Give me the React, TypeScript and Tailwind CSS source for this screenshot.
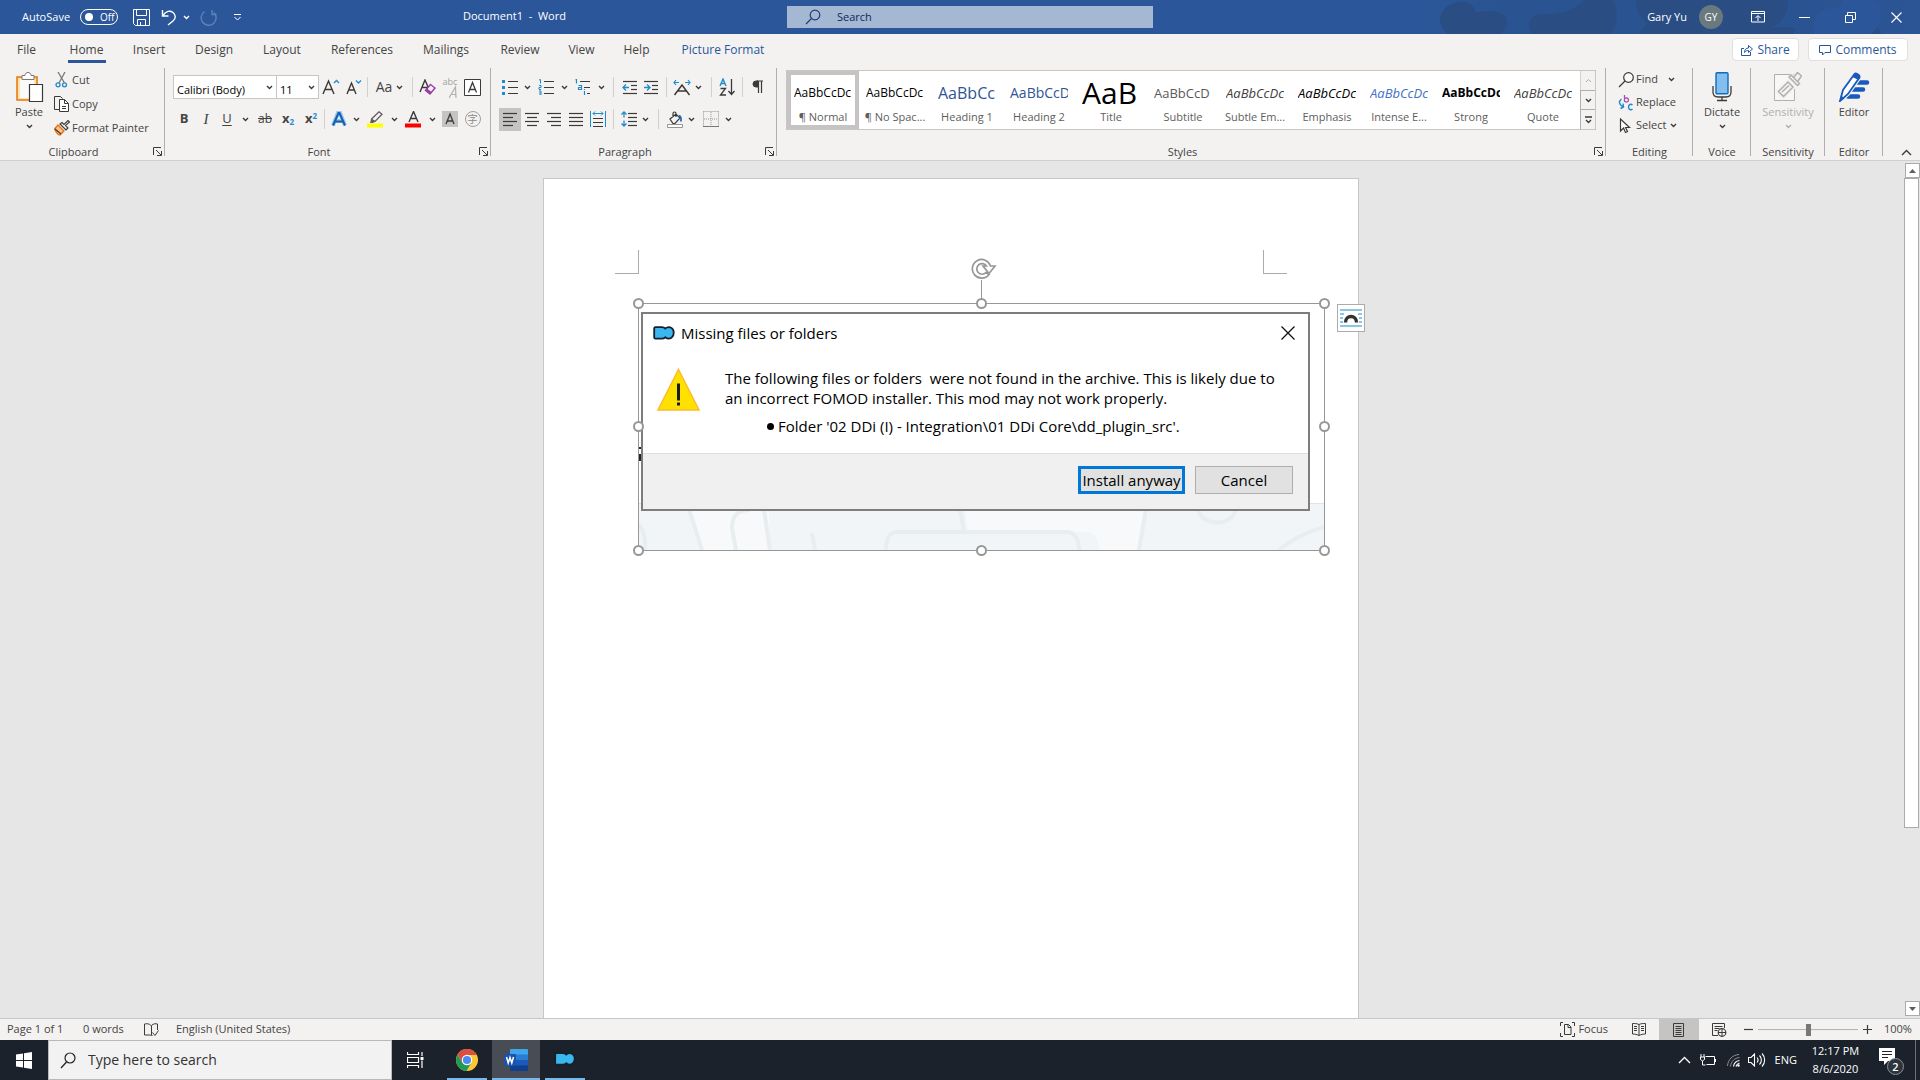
import type { ReactNode } from "react";

const INK = "#3b3a39";
const BLUE = "#1e8bcd";

function Svg({ w = 16, h = 16, children, className = "" }: { w?: number; h?: number; children: ReactNode; className?: string }) {
  return (
    <svg width={w} height={h} viewBox={`0 0 ${w} ${h}`} fill="none" stroke={INK} className={`shrink-0 ${className}`} aria-hidden="true">
      {children}
    </svg>
  );
}

function Caret({ color = INK }: { color?: string }) {
  return (
    <Svg w={7} h={5}>
      <path d="M1 1l2.5 2.5L6 1" stroke={color} strokeWidth="1.4" />
    </Svg>
  );
}

function Cell({ w, on, children }: { w: string; on?: boolean; children: ReactNode }) {
  return (
    <button type="button" className={`flex h-[23px] shrink-0 items-center justify-center ${w} ${on ? "bg-[#c5c4c3]" : ""}`}>
      {children}
    </button>
  );
}

function Sep({ w }: { w: string }) {
  return (
    <div className={`flex shrink-0 justify-center ${w}`}>
      <div className="h-5 w-px bg-[#d2d0ce]" />
    </div>
  );
}

function Launcher() {
  return (
    <button type="button" className="absolute bottom-1 right-[3px]">
      <Svg w={9} h={9}>
        <path d="M.5 8V.5H8M3 3l5 5M8.500 4v4.500H4" />
      </Svg>
    </button>
  );
}

function Group({ label, w, launcher, children }: { label: string; w: string; launcher?: boolean; children: ReactNode }) {
  return (
    <section className={`relative flex h-[92px] shrink-0 flex-col ${w}`}>
      <div className="flex-1">{children}</div>
      <h2 className={`h-4 text-center text-[11px] leading-4 ${launcher ? "pr-[18px]" : ""}`}>{label}</h2>
      {launcher && <Launcher />}
      <div className="absolute right-0 top-0 h-[88px] w-px bg-[#b1afad]" />
    </section>
  );
}

function lines(rows: [number, number][], ys = [2.5, 6.5, 10.5, 14.5]) {
  return rows.map(([a, b], i) => <path key={i} d={`M${a} ${ys[i]}H${b}`} strokeWidth="1.2" />);
}

const tabs: [string, string][] = [
  ["File", "w-[53px]"],
  ["Home", "w-[67px]"],
  ["Insert", "w-[58px]"],
  ["Design", "w-[72px]"],
  ["Layout", "w-[64px]"],
  ["References", "w-[96px]"],
  ["Mailings", "w-[72px]"],
  ["Review", "w-[76px]"],
  ["View", "w-[47px]"],
  ["Help", "w-[63px]"],
  ["Picture Format", "w-[110px]"],
];

const styleCards: [string, string, string][] = [
  ["¶ Normal", "AaBbCcDc", "text-xs text-black"],
  ["¶ No Spac...", "AaBbCcDc", "text-xs text-black"],
  ["Heading 1", "AaBbCc", "text-base text-[#2f5496]"],
  ["Heading 2", "AaBbCcD", "text-sm text-[#2f5496]"],
  ["Title", "AaB", "text-[30px] text-black"],
  ["Subtitle", "AaBbCcD", "text-[13px] text-[#5a5a5a]"],
  ["Subtle Em...", "AaBbCcDc", "text-[13px] italic text-[#404040]"],
  ["Emphasis", "AaBbCcDc", "text-[13px] italic text-black"],
  ["Intense E...", "AaBbCcDc", "text-[13px] italic text-[#4472c4]"],
  ["Strong", "AaBbCcDc", "text-xs font-bold text-black"],
  ["Quote", "AaBbCcDc", "text-[13px] italic text-[#404040]"],
];

function TitleBar() {
  return (
    <header className="relative flex h-[34px] shrink-0 items-center bg-[#2b579a] text-[11px] text-white">
      <svg className="absolute right-0 top-0" width="500" height="34" viewBox="0 0 500 34" aria-hidden="true">
        <defs>
          <linearGradient id="sky" x1="0" x2="1">
            <stop offset="0" stopColor="#2b579a" />
            <stop offset=".15" stopColor="#2a5391" />
            <stop offset=".8" stopColor="#2a5391" />
            <stop offset="1" stopColor="#2b5596" />
          </linearGradient>
        </defs>
        <path fill="url(#sky)" d="M0 0h500v34H0z" />
        <g fill="#2a4d84">
          <path d="M28 34c-12-8-10-25 4-30 10-6 22-1 24 9 14-4 30-2 31 8 0 6-3 10-6 13z" />
          <path d="M112 34c-6-10-2-18 8-20 20 2 38-6 44-14h28c8 10 6 26-2 34z" />
          <path d="M216 0h152c1 12-6 24-18 28 8 0 16-2 26 1l-3 5H220c0-4 4-8 8-10-8-5-12-14-12-24z" />
          <path d="M441 34c2-10 18-11 20 0z" />
        </g>
        <g fill="#2b579a">
          <path d="M394 34c-2-14 2-22 14-26 8 2 12 0 14-8h33c10 10 6 26-4 34z" />
        </g>
      </svg>
      <div className="relative flex flex-1 items-center">
        <span className="ml-[22px] w-[58px]">AutoSave</span>
        <button type="button" role="switch" aria-checked="false" aria-label="AutoSave" className="flex h-4 w-[38px] items-center gap-[7px] rounded-full border border-white pl-1 text-[10px]">
          <span className="size-2 rounded-full bg-white" />
          Off
        </button>
        <button type="button" aria-label="Save" className="ml-[15px]">
          <Svg w={17} h={17}>
            <path stroke="#fff" d="M.5.500h16v16h-14l-2-2zM3.500.500v6h10v-6M4.500 16.500v-6h8v6M7.500 13v3" />
          </Svg>
        </button>
        <button type="button" aria-label="Undo" className="ml-[11px] flex items-center gap-[6px]">
          <Svg w={16} h={17}>
            <path stroke="#fff" strokeWidth="1.4" d="M1.500 1v6h6M1.500 7C5 2 9 1 12 3.500s3 6 0 8.500l-5 4" />
          </Svg>
          <Caret color="#fff" />
        </button>
        <button type="button" aria-label="Redo" className="ml-[10px]">
          <Svg w={18} h={17}>
            <path stroke="#5f82b8" strokeWidth="1.4" d="M12 1v4.500h4.500M4.500 2.500a7.500 7.500 0 1 0 9.500 1" />
          </Svg>
        </button>
        <button type="button" aria-label="Customize" className="ml-[15px]">
          <Svg w={9} h={7}>
            <path stroke="#fff" d="M1 .500h7M1.500 3l3 3 3-3" />
          </Svg>
        </button>
        <h1 className="ml-[221px] whitespace-pre pb-px">Document1  -  Word</h1>
      </div>
      <label className="relative ml-5 flex h-[22px] w-[366px] items-center bg-[#a5b8d3] pl-[18px]">
        <Svg w={16} h={16}>
          <circle cx="10" cy="6" r="4.800" stroke="#1e3f75" strokeWidth="1.200" />
          <path d="M6.500 9.500L1 15" stroke="#1e3f75" strokeWidth="1.200" />
        </Svg>
        <input type="text" placeholder="Search" className="ml-4 w-60 bg-transparent text-[11px] outline-none placeholder:text-[#0c2a5a]" />
      </label>
      <div className="relative flex flex-1 items-center justify-end">
        <span>Gary Yu</span>
        <span className="ml-3 flex size-6 items-center justify-center rounded-full bg-[#69797e] text-[10px]">GY</span>
        <button type="button" aria-label="Ribbon Display Options" className="ml-7">
          <Svg w={14} h={12}>
            <path stroke="#fff" d="M.500.500h13v10.500H.500zM.500 2.500h13M7 10V5M4.500 7L7 4.500 9.500 7" />
          </Svg>
        </button>
        <button type="button" aria-label="Minimize" className="ml-[34px]">
          <Svg w={11} h={11}>
            <path stroke="#fff" d="M0 5.500h11" />
          </Svg>
        </button>
        <button type="button" aria-label="Restore" className="ml-[35px]">
          <Svg w={11} h={11}>
            <path stroke="#fff" d="M.500 3.500h7v7h-7zM2.500 3V.500h8v7H8" />
          </Svg>
        </button>
        <button type="button" aria-label="Close" className="ml-[35px] mr-[18px]">
          <Svg w={11} h={11}>
            <path stroke="#fff" d="M.500.500l10 10M10.500.500l-10 10" strokeWidth="1.200" />
          </Svg>
        </button>
      </div>
    </header>
  );
}

function TabRow() {
  return (
    <nav className="flex h-[34px] items-center text-xs">
      {tabs.map(([name, w]) => (
        <button key={name} type="button" className={`relative h-[34px] shrink-0 pb-[3px] ${w} ${name === "Picture Format" ? "text-[#2b579a]" : ""}`}>
          {name}
          {name === "Home" && <span className="absolute bottom-[5px] left-[15px] h-[3px] w-[38px] bg-[#2b579a]" />}
        </button>
      ))}
      <div className="ml-auto mr-3 flex gap-[9px] pb-[3px] text-[#2b579a]">
        <button type="button" className="flex h-[23px] w-[67px] items-center justify-center gap-1 rounded-sm border border-[#e1dfdd] bg-white">
          <Svg w={12} h={12}>
            <path stroke="#2b579a" d="M3 4.500H.500v7h9V8M3.500 8.500c0-3 1.500-4.500 4-4.500V1.500l4 3.500-4 3.500V6.500c-2 0-3 .500-4 2z" />
          </Svg>
          Share
        </button>
        <button type="button" className="flex h-[23px] w-[100px] items-center justify-center gap-1 rounded-sm border border-[#e1dfdd] bg-white">
          <Svg w={12} h={12}>
            <path stroke="#2b579a" d="M.500 1.500h11v7H6l-2.500 2.500V8.500h-3z" />
          </Svg>
          Comments
        </button>
      </div>
    </nav>
  );
}

function ClipboardGroup() {
  return (
    <Group label="Clipboard" w="w-[165px]" launcher>
      <div className="flex">
        <button type="button" className="flex w-[54px] flex-col items-center pl-1 pt-[3px] text-[11px] leading-4">
          <Svg w={30} h={33}>
            <path d="M3 6h20v23H3z" fill="#fce4a8" stroke="#e8730c" strokeWidth="1.500" />
            <path d="M6 8h14v19H6z" fill="#fafafa" stroke="none" />
            <path d="M8 8.500v-4h3c0-4 6-4 6 0h3v4z" fill="#fff" stroke="#7a7978" />
            <path d="M15.500 13.500h13v17h-13z" fill="#fff" strokeWidth="1.200" />
          </Svg>
          Paste
          <span className="mt-1">
            <Caret />
          </span>
        </button>
        <div className="text-[11px]">
          <button type="button" className="flex h-6 items-center">
            <Svg w={18} h={16}>
              <path d="M4 0l6.500 11M11 0L5 11" stroke="#7a7978" strokeWidth="1.300" />
              <circle cx="4" cy="12.800" r="2" stroke={BLUE} strokeWidth="1.300" />
              <circle cx="10.500" cy="12.800" r="2" stroke={BLUE} strokeWidth="1.300" />
            </Svg>
            Cut
          </button>
          <button type="button" className="flex h-6 items-center">
            <Svg w={18} h={16}>
              <path d="M5 13.500H.500V.500h6l2 2" />
              <path d="M5.500 3.500h5l4 4v8h-9z" fill="#fff" />
              <path d="M10.500 3.500v4h4M8 10.500h4M8 12.500h4" />
            </Svg>
            Copy
          </button>
          <button type="button" className="flex h-6 items-center">
            <Svg w={18} h={16}>
              <path d="M4 5l6 6-4 4c-2 0-4-3-5.500-6z" fill="#f9c38b" stroke="#e8730c" strokeWidth="1.300" />
              <path d="M1 9l6 5M6 4l6 6 2-2-2.500-2.500L15.500 2 14 .500l-4 4L8 2.500z" fill="#f3f2f1" strokeWidth="1.100" />
            </Svg>
            Format Painter
          </button>
        </div>
      </div>
    </Group>
  );
}

function Combo({ value, label, w }: { value: string; label: string; w: string }) {
  return (
    <div className={`relative -mr-px h-6 border border-[#c8c6c4] bg-white ${w}`}>
      <select aria-label={label} className="h-full w-full appearance-none bg-transparent pb-[2px] pl-[3px] text-[11px] text-black outline-none">
        <option>{value}</option>
      </select>
      <span className="pointer-events-none absolute right-[3px] top-0 flex h-full items-center">
        <Caret />
      </span>
    </div>
  );
}

function FontGroup() {
  return (
    <Group label="Font" w="w-[326px]" launcher>
      <div className="flex h-[35px] items-center pl-2 pt-[3px]">
        <Combo value="Calibri (Body)" label="Font" w="w-[104px]" />
        <Combo value="11" label="Font size" w="w-[43px]" />
        <Cell w="w-[25px]">
          <Svg w={18} h={16}>
            <path d="M1 15L6.500 2 12 15M3 10.500h7" strokeWidth="1.400" />
            <path d="M12 4l2.500-2.500L17 4" stroke={BLUE} strokeWidth="1.300" />
          </Svg>
        </Cell>
        <Cell w="w-[21px]">
          <Svg w={16} h={16}>
            <path d="M1 15L5.500 4 10 15M2.500 11h6" strokeWidth="1.400" />
            <path d="M10 1.500L12.500 4 15 1.500" stroke={BLUE} strokeWidth="1.300" />
          </Svg>
        </Cell>
        <Sep w="w-[6px]" />
        <Cell w="w-[39px]">
          <span className="mr-1 text-sm">Aa</span>
          <Caret />
        </Cell>
        <Sep w="w-[6px]" />
        <Cell w="w-[24px]">
          <Svg w={17} h={16}>
            <path d="M1 13L6 1l4 9M3 8.500h6" strokeWidth="1.400" />
            <path d="M11.500 5.500L16 9l-5 6-4.500-3.500z" fill="#f3f2f1" stroke="#9b3aa8" strokeWidth="1.400" />
            <path d="M6.500 11.500L8 9.500l4.500 3.500-1.500 2z" fill="#9b3aa8" stroke="none" />
          </Svg>
        </Cell>
        <Cell w="w-[22px]">
          <span className="self-start text-[9px] leading-3 text-[#a19f9d]">abc</span>
          <Svg w={8} h={14} className="-ml-2 self-end">
            <path d="M0 13L6.500 2 7 13M3 9.500h4" stroke="#b1afad" strokeWidth="1.200" />
          </Svg>
        </Cell>
        <Cell w="w-[22px]">
          <Svg w={17} h={17}>
            <path d="M.500.500h16v16H.500z" fill="#fff" />
            <path d="M4.500 13.500l4-10 4 10M6 10.500h5" strokeWidth="1.300" />
          </Svg>
        </Cell>
      </div>
      <div className="flex h-8 items-center pl-2">
        <Cell w="w-[22px]"><b className="text-[13px]">B</b></Cell>
        <Cell w="w-[22px]"><i className="font-['Liberation_Serif'] text-[15px]">I</i></Cell>
        <Cell w="w-[20px]"><u className="text-[13px] underline-offset-2">U</u></Cell>
        <Cell w="w-[17px]"><Caret /></Cell>
        <Cell w="w-[22px]"><s className="text-xs">ab</s></Cell>
        <Cell w="w-[24px]"><b className="text-[13px]">x<sub className="text-[8px] text-[#1e8bcd]">2</sub></b></Cell>
        <Cell w="w-[22px]"><b className="text-[13px]">x<sup className="text-[8px] text-[#1e8bcd]">2</sup></b></Cell>
        <Sep w="w-[5px]" />
        <Cell w="w-[24px]">
          <Svg w={16} h={16}>
            <path d="M2 14.500L7 2h2l5 12.500M4.500 10h7" stroke="#9cc3e8" strokeWidth="4" />
            <path d="M2 14.500L7.500 2h1L14 14.500M4.500 10.500h7" stroke="#1260b0" strokeWidth="2" />
          </Svg>
        </Cell>
        <Cell w="w-[10px]"><Caret /></Cell>
        <Cell w="w-[28px]">
          <Svg w={17} h={17}>
            <path d="M4.500 8L12 .800l3 2.500L8 10.500l-3.500.500z" stroke="#605e5c" strokeWidth="1.300" />
            <path d="M4.500 7.500L3 12h3l2.500-2z" fill="#605e5c" stroke="none" />
            <path d="M0 12.500h16v4H0z" fill="#ff0" stroke="none" />
          </Svg>
        </Cell>
        <Cell w="w-[10px]"><Caret /></Cell>
        <Cell w="w-[28px]">
          <Svg w={17} h={17}>
            <path d="M4 11L8.500.500 13 11M5.500 7.500h6" strokeWidth="1.400" />
            <path d="M0 12.500h16v4H0z" fill="#f00" stroke="none" />
          </Svg>
        </Cell>
        <Cell w="w-[10px]"><Caret /></Cell>
        <Cell w="w-[25px]">
          <Svg w={16} h={16}>
            <path d="M0 0h16v16H0z" fill="#c5c4c3" stroke="none" />
            <path d="M4 13l4-10 4 10M5.500 10h5" strokeWidth="1.300" />
          </Svg>
        </Cell>
        <Cell w="w-[21px]">
          <span className="flex size-4 items-center justify-center rounded-full border border-[#a19f9d] font-['Noto_Sans_CJK_SC',sans-serif] text-[10px] leading-none text-[#8a8886]">字</span>
        </Cell>
      </div>
    </Group>
  );
}

function ParagraphGroup() {
  return (
    <Group label="Paragraph" w="w-[286px]" launcher>
      <div className="flex h-[35px] items-center pl-2 pt-[3px]">
        <Cell w="w-[22px]">
          <Svg>
            <path d="M0 2.500h3M0 8.500h3M0 14.500h3" stroke={BLUE} strokeWidth="3" />
            <path d="M6 2.500h10M6 8.500h10M6 14.500h10" strokeWidth="1.200" />
          </Svg>
        </Cell>
        <Cell w="w-[13px]"><Caret /></Cell>
        <Cell w="w-[24px]">
          <Svg>
            <path d="M1 1l1.500-.500v4M1 6.500h2v2H1v2h2M1 12h2v4H1M1 14h2" stroke={BLUE} />
            <path d="M6 2.500h10M6 8.500h10M6 14.500h10" strokeWidth="1.200" />
          </Svg>
        </Cell>
        <Cell w="w-[13px]"><Caret /></Cell>
        <Cell w="w-[24px]">
          <Svg>
            <path d="M.500 1l1-.500v4M3.500 6.500h3v4h-3v-2h3M9.500 12v4M9.500 10v1" stroke={BLUE} strokeWidth="1.200" />
            <path d="M5 2.500h10M9 8.500h6M12 14.500h3" strokeWidth="1.200" />
          </Svg>
        </Cell>
        <Cell w="w-[12px]"><Caret /></Cell>
        <Sep w="w-[12px]" />
        <Cell w="w-[21px]">
          <Svg>
            {lines([[1, 15], [9, 15], [9, 15], [1, 15]])}
            <path d="M1 8.500h6M4 5.500l-3 3 3 3" stroke={BLUE} strokeWidth="1.300" />
          </Svg>
        </Cell>
        <Cell w="w-[22px]">
          <Svg>
            {lines([[1, 15], [9, 15], [9, 15], [1, 15]])}
            <path d="M1 8.500h6M4 5.500l3 3-3 3" stroke={BLUE} strokeWidth="1.300" />
          </Svg>
        </Cell>
        <Sep w="w-[9px]" />
        <Cell w="w-[22px]">
          <Svg w={18} h={17}>
            <path d="M1.500 16L9 6l7.500 10M5 12h8" strokeWidth="1.500" />
            <path d="M1 3.500h5M3 1L1 3.500 3 6M17 3.500h-5M15 1l2 2.500L15 6" stroke={BLUE} strokeWidth="1.200" />
          </Svg>
        </Cell>
        <Cell w="w-[10px]"><Caret /></Cell>
        <Sep w="w-[16px]" />
        <Cell w="w-[16px]">
          <Svg w={17} h={18}>
            <path d="M1 8l3-7 3 7M2 5.500h4" stroke={BLUE} strokeWidth="1.400" />
            <path d="M1.500 10.500h5L1.500 17h5.500M12.500 1v15M9.500 13l3 3.500 3-3.500" strokeWidth="1.300" />
          </Svg>
        </Cell>
        <Sep w="w-[14px]" />
        <Cell w="w-[18px]">
          <Svg w={12} h={14}>
            <path d="M6 1H4a3 3 0 0 0 0 6h2z" fill={INK} />
            <path d="M5 1h6M6.500 1v12M9.500 1v12" strokeWidth="1.200" />
          </Svg>
        </Cell>
      </div>
      <div className="flex h-8 items-center pl-2">
        <Cell w="w-[22px]" on>
          <Svg>{lines([[1, 15], [1, 11], [1, 15], [1, 11]])}</Svg>
        </Cell>
        <Cell w="w-[22px]">
          <Svg>{lines([[1, 15], [3, 13], [1, 15], [3, 13]])}</Svg>
        </Cell>
        <Cell w="w-[22px]">
          <Svg>{lines([[1, 15], [5, 15], [1, 15], [5, 15]])}</Svg>
        </Cell>
        <Cell w="w-[22px]">
          <Svg>{lines([[1, 15], [1, 15], [1, 15], [1, 15]])}</Svg>
        </Cell>
        <Cell w="w-[22px]">
          <Svg>
            <path d="M.500 0v16M15.500 0v16M3 2.500h10M5 .500l-2 2 2 2M11 .500l2 2-2 2" stroke={BLUE} />
            <path d="M3 7.500h10M3 11.500h10M3 15.500h10" strokeWidth="1.200" />
          </Svg>
        </Cell>
        <Sep w="w-[9px]" />
        <Cell w="w-[22px]">
          <Svg>
            <path d="M3 1v5.500M.500 3.500L3 1l2.500 2.500M3 9.500V15M.500 12.500L3 15l2.500-2.500" stroke={BLUE} strokeWidth="1.300" />
            {lines([[7, 16], [7, 16], [7, 16], [7, 16]])}
          </Svg>
        </Cell>
        <Cell w="w-[10px]"><Caret /></Cell>
        <Sep w="w-[16px]" />
        <Cell w="w-[17px]">
          <Svg w={16} h={17}>
            <path d="M3 8l6-5 4 4-5 5.500H6zM9 6V2.500a1.500 1.500 0 0 0-3 0V6" strokeWidth="1.200" />
            <path d="M12 4.500c2 1 2.500 3 1.800 6" stroke="#1e6fb8" strokeWidth="1.800" />
            <path d="M.500 13.500h15v3H.500z" fill="#fff" stroke="#979593" />
          </Svg>
        </Cell>
        <Cell w="w-[17px]"><Caret /></Cell>
        <Cell w="w-[22px]">
          <Svg>
            <path d="M.500.500h15M.500.500v15M15.500.500v15M8 1v14M1 8h14" stroke="#979593" strokeDasharray="1 1" />
            <path d="M0 15.500h16" stroke="#797775" />
          </Svg>
        </Cell>
        <Cell w="w-[12px]"><Caret /></Cell>
      </div>
    </Group>
  );
}

function StylesGroup() {
  return (
    <Group label="Styles" w="min-w-0 flex-1" launcher>
      <div className="ml-[9px] mr-[10px] mt-[2px] flex h-[60px] border border-[#c8c6c4] bg-white">
        <div className="flex min-w-0 flex-1 overflow-hidden">
          {styleCards.map(([name, sample, cls], i) => (
            <button key={name} type="button" className={`flex h-[58px] w-[72px] shrink-0 flex-col items-center ${i === 0 ? "outline-4 -outline-offset-4 outline-[#c5c4c3]" : ""}`}>
              <span className={`mt-[6px] flex h-8 w-[58px] items-center overflow-hidden whitespace-nowrap leading-8 ${cls}`}>{sample}</span>
              <span className="text-[11px] leading-4 text-[#605e5c]">{name}</span>
            </button>
          ))}
        </div>
        <div className="flex w-[15px] flex-col bg-[#f3f2f1]">
          <button type="button" aria-label="Row up" className="flex flex-1 items-center justify-center border-l border-[#d2d0ce]">
            <Svg w={7} h={5}><path d="M1 4l2.500-2.500L6 4" stroke="#b1afad" /></Svg>
          </button>
          <button type="button" aria-label="Row down" className="flex flex-1 items-center justify-center border border-r-0 border-[#b1afad]">
            <Caret />
          </button>
          <button type="button" aria-label="More" className="flex flex-1 items-center justify-center border-l border-[#b1afad]">
            <Svg w={7} h={8}><path d="M0 1h7M1 4l2.500 2.500L6 4" strokeWidth="1.300" /></Svg>
          </button>
        </div>
      </div>
    </Group>
  );
}

function EditingGroup() {
  return (
    <Group label="Editing" w="w-[87px]">
      <div className="pl-3 text-[11px]">
        <button type="button" className="flex h-[23px] items-center">
          <Svg w={16} h={16}>
            <circle cx="10.500" cy="5.500" r="4.800" strokeWidth="1.200" fill="#fafafa" />
            <path d="M7 9L1 15" strokeWidth="1.300" />
          </Svg>
          <span className="ml-[2px] mr-[10px]">Find</span>
          <Caret />
        </button>
        <button type="button" className="flex h-[23px] items-center">
          <Svg w={16} h={16}>
            <path d="M6.500 0v7M6.500 4c1-1.500 4-1.500 4 1s-3 2.500-4 1" stroke="#a84fb5" strokeWidth="1.300" />
            <path d="M14.500 10c-1.500-1.500-4-.500-4 2s2.500 3.500 4 2M3.500 4c-3 2-2.500 6 1 7.500M2.500 13.500l3-1.500-.500-3.500" stroke={BLUE} strokeWidth="1.400" />
          </Svg>
          <span className="ml-[2px]">Replace</span>
        </button>
        <button type="button" className="flex h-[23px] items-center">
          <Svg w={16} h={16}>
            <path d="M2.500 1v12l3-3 2 4.500 2-1-2-4h4z" fill="#fff" strokeWidth="1.200" />
          </Svg>
          <span className="ml-[2px] mr-1">Select</span>
          <Caret />
        </button>
      </div>
    </Group>
  );
}

function BigButton({ text, caret, dim, children }: { text: string; caret?: boolean; dim?: boolean; children: ReactNode }) {
  return (
    <button type="button" className={`flex w-full flex-col items-center pt-1 text-[11px] leading-4 ${dim ? "text-[#b1afad]" : ""}`}>
      {children}
      <span className="mt-[2px]">{text}</span>
      {caret && (
        <span className="mt-1">
          <Caret color={dim ? "#b1afad" : INK} />
        </span>
      )}
    </button>
  );
}

function Ribbon() {
  return (
    <div className="shrink-0 border-b border-[#d2d0ce] bg-[#f3f2f1] text-[#444]">
      <TabRow />
      <div className="flex">
        <ClipboardGroup />
        <FontGroup />
        <ParagraphGroup />
        <StylesGroup />
        <EditingGroup />
        <Group label="Voice" w="w-[58px]">
          <BigButton text="Dictate" caret>
            <Svg w={20} h={30}>
              <path d="M1 14v6c0 3 2 5 5 5h8c3 0 5-2 5-5v-6M10 25v3M5 28.500h10" strokeWidth="1.300" />
              <rect x="4" y=".700" width="12" height="21" rx="1" fill="#83beec" stroke="#0f6cbd" strokeWidth="1.400" />
            </Svg>
          </BigButton>
        </Group>
        <Group label="Sensitivity" w="w-[74px]">
          <BigButton text="Sensitivity" caret dim>
            <Svg w={28} h={30}>
              <path d="M.500 2.500h20v26H.500z" stroke="#b1afad" fill="#f8f7f6" />
              <path d="M13 12l6 6M15 5l8 8M16 3l9 9M20 3l5-3 3 3-4 5M4 20L15 9l5 5L9 25z" stroke="#f3f2f1" strokeWidth="5" />
              <path d="M4.500 19.500L14 10l5 5-9.500 9.500zM8 20l7-6.500M15 5l8.500 8.500 2-2L17 3zM20 5l3.500-4.500L27.500 4 24 9" stroke="#b1afad" strokeWidth="1.500" />
            </Svg>
          </BigButton>
        </Group>
        <Group label="Editor" w="w-[58px]">
          <BigButton text="Editor">
            <Svg w={32} h={30}>
              <path d="M18 10.500h11M14 17.500h11M10 24.500h10" stroke="#185abd" strokeWidth="4.500" strokeLinecap="round" />
              <path d="M2 29l3-11L16.500 2c1-1.500 6 1 5 3.500L10 22z" fill="#fff" stroke="#f3f2f1" strokeWidth="4" />
              <path d="M2 29l3-11L16.500 2c1-1.500 6 1 5 3.500L10 22z" fill="#fff" stroke="#185abd" strokeWidth="1.800" />
              <path d="M16.500 2c1-2 6.500 1 5.500 3.500l-1.500 2.500-6-3zM1.500 29.500l1.500-6 3.500 3z" fill="#185abd" stroke="none" />
            </Svg>
          </BigButton>
        </Group>
        <button type="button" aria-label="Collapse the Ribbon" className="flex w-[37px] items-end justify-center pb-1 pl-[10px]">
          <Svg w={11} h={7}><path d="M1 6l4.500-4.500L10 6" strokeWidth="1.400" /></Svg>
        </button>
      </div>
    </div>
  );
}

function ModLogo({ w, h }: { w: number; h: number }) {
  return (
    <svg width={w} height={h} viewBox="0 0 22 14" aria-hidden="true">
      <path d="M1.200 2.500c0-.700.500-1.300 1.300-1.300H9c1.500 0 2.500.600 3.200 1.400C14 1.200 16.500.800 18.500 2c3 1.800 3 7.800 0 9.800-2 1.300-4.500.900-6.300-.500-.800.900-1.700 1.400-3.200 1.400H2.500c-.800 0-1.300-.500-1.300-1.200z" fill="#3ab7ee" stroke="#15202b" strokeWidth="1.800" />
    </svg>
  );
}

const handles = [
  "-left-[6px] -top-[6px]",
  "left-1/2 -ml-[6px] -top-[6px]",
  "-right-[6px] -top-[6px]",
  "-left-[6px] top-1/2 -mt-[6px]",
  "-right-[6px] top-1/2 -mt-[6px]",
  "-left-[6px] -bottom-[6px]",
  "left-1/2 -ml-[6px] -bottom-[6px]",
  "-right-[6px] -bottom-[6px]",
];

function MissingFilesDialog() {
  return (
    <div role="dialog" aria-labelledby="dlg-title" className="relative flex h-[199px] w-[669px] flex-col border-2 border-[#7d7d7d] bg-white text-[15px] leading-5 text-black">
      <div className="flex h-[38px] items-center pl-[10px] pr-3">
        <ModLogo w={22} h={14} />
        <h2 id="dlg-title" className="ml-[6px] flex-1">Missing files or folders</h2>
        <button type="button" aria-label="Close">
          <svg width="16" height="16" viewBox="0 0 16 16" stroke="#111" strokeWidth="1.300" aria-hidden="true">
            <path d="M1.500 1.500l13 13M14.500 1.500l-13 13" />
          </svg>
        </button>
      </div>
      <div className="flex flex-1 pl-[14px] pt-4">
        <svg width="43" height="43" viewBox="0 0 43 43" className="shrink-0" aria-hidden="true">
          <path d="M21.500 1.500L42 42H1z" fill="#ffe100" stroke="#fdbb2c" strokeWidth="1.500" />
          <path d="M20 15.500h3v17h-3zM20 34.500h3v3h-3z" fill="#1a1a1a" />
        </svg>
        <div className="ml-[25px]">
          <p className="whitespace-pre">
            {"The following files or folders  were not found in the archive. This is likely due to\nan incorrect FOMOD installer. This mod may not work properly."}
          </p>
          <ul className="pl-[42px] pt-2">
            <li className="flex items-center gap-1">
              <span className="size-[7px] rounded-full bg-black" />
              Folder '02 DDi (I) - Integration\01 DDi Core\dd_plugin_src'.
            </li>
          </ul>
        </div>
      </div>
      <div className="flex h-14 shrink-0 justify-end gap-[10px] border-t border-[#dfdfdf] bg-[#f0f0f0] pr-[15px] pt-3">
        <button type="button" className="h-7 w-[107px] whitespace-nowrap border-[3px] border-[#0078d7] bg-[#e1e1e1] leading-none">Install anyway</button>
        <button type="button" className="h-7 w-[98px] border border-[#adadad] bg-[#e1e1e1] leading-none">Cancel</button>
      </div>
    </div>
  );
}

function Picture() {
  return (
    <div className="relative ml-[94px] mt-[29px] h-[248px] w-[687px] border border-[#979797] pl-[2px] pt-2">
      <svg className="absolute bottom-0 left-0" width="685" height="47" viewBox="0 0 685 47" fill="none" aria-hidden="true">
        <path d="M0 0h685v47H0z" fill="#f1f5f8" />
        <path d="M50 0h80v47H62zM325 0h185l-10 47H332z" fill="#f8f9fb" />
        <path d="M247 47c0-12 3-18 12-18h189c8 0 12 8 12 18z" fill="#f1f5f8" />
        <g stroke="#e8edf0" strokeWidth="4">
          <path d="M50 6l13 41M0 22c6 8 7 16 6 25M97 47l-4-22c0-12 5-18 18-18M125 7l6 40M173 30l3 17M321 5l4 24M247 47c0-12 3-18 12-18h169c8 0 12 8 12 18M508 0l-8 47M559 6c4 18 34 18 38 0M640 47c12-10 28-18 45-23" />
        </g>
        <path d="M0 .500h685" stroke="#dde4e8" />
      </svg>
      <svg className="absolute left-0 top-[142px]" width="3" height="16" viewBox="0 0 3 16" aria-hidden="true">
        <path d="M0 1h2v2H0zM0 8h3v7H0z" fill="#222" />
      </svg>
      <MissingFilesDialog />
      <div className="absolute -top-[24px] left-1/2 -ml-px h-5 w-px bg-[#979797]" />
      <svg className="absolute -top-[46px] left-1/2 -ml-[11px]" width="26" height="22" viewBox="0 0 26 22" fill="none" stroke="#979797" aria-hidden="true">
        <path d="M18 16.500A9.300 9.300 0 1 1 19.500 8H24l-6 7.500L12 8h3.500a5.300 5.300 0 1 0-.500 6.500z" fill="#fff" strokeWidth="1.700" />
      </svg>
      {handles.map((pos) => (
        <span key={pos} className={`absolute size-[11px] rounded-full border-2 border-[#979797] bg-white ${pos}`} />
      ))}
      <button type="button" aria-label="Layout Options" className="absolute -right-[41px] top-0 flex size-7 items-center justify-center border border-[#ababab] bg-white">
        <Svg w={22} h={18}>
          <path d="M0 1h22M0 5h4M18 5h4M0 9h3M19 9h3M0 13h3M19 13h3M0 17h22" stroke={BLUE} strokeWidth="1.200" />
          <path d="M5.500 13.500c0-8 11-8 11 0" stroke="#333" strokeWidth="3.400" />
        </Svg>
      </button>
    </div>
  );
}

function Canvas() {
  return (
    <main className="flex min-h-0 flex-1 bg-[#e6e6e6]">
      <div className="flex flex-1 justify-center overflow-hidden pr-[2px] pt-[17px]">
        <div className="w-[816px] border border-b-0 border-[#c6c6c6] bg-white pt-[71px]">
          <div className="flex justify-between px-[71px]">
            <div className="size-6 border-b border-r border-[#ababab]" />
            <div className="size-6 border-b border-l border-[#ababab]" />
          </div>
          <Picture />
        </div>
      </div>
      <div className="flex w-4 flex-col items-center pb-[2px] pt-[2px]">
        <button type="button" aria-label="Scroll up" className="flex h-[15px] w-[15px] shrink-0 items-center justify-center border border-[#ababab] bg-white">
          <Svg w={7} h={4}><path d="M0 4l3.500-4L7 4z" fill="#605e5c" stroke="none" /></Svg>
        </button>
        <div className="w-full flex-1">
          <div className="h-[79%] w-[15px] border border-[#ababab] bg-white" />
        </div>
        <button type="button" aria-label="Scroll down" className="flex h-[15px] w-[15px] shrink-0 items-center justify-center border border-[#ababab] bg-white">
          <Svg w={7} h={4}><path d="M0 0l3.500 4L7 0z" fill="#605e5c" stroke="none" /></Svg>
        </button>
      </div>
    </main>
  );
}

function StatusBar() {
  return (
    <footer className="flex h-[22px] shrink-0 items-center border-t border-[#c6c6c6] bg-[#f3f2f1] text-[11px] text-[#444]">
      <span className="ml-[7px] w-[76px]">Page 1 of 1</span>
      <span className="w-[61px]">0 words</span>
      <Svg w={15} h={14}>
        <path d="M7 2.500C5 .500 3 .500.500 1v11h6l1 1 1-1M7.500 2.500V12M7.500 2.500c2-2 4-2 6-1.500v6M8.500 9.500l2.500 3 3.500-5" />
      </Svg>
      <span className="ml-[17px]">English (United States)</span>
      <button type="button" className="ml-auto flex items-center gap-[3px]">
        <Svg w={15} h={15}>
          <path d="M.500 4V.500H3M12 .500h2.500V4M.500 11v3.500H3M12 14.500h2.500V11M4.500 2.500h4l2.500 2.500v7.500H4.500zM8 2.500V5.500h3" />
        </Svg>
        Focus
      </button>
      <button type="button" aria-label="Read Mode" className="ml-6 mr-[13px]">
        <Svg w={14} h={13}>
          <path d="M7 1.500v11M7 1.500C5 .500 3 .500.500.500v10.500C3 11 5 11.500 7 12.500 9 11.500 11 11 13.500 11V.500C11 .500 9 .500 7 1.500M2 3.500h3M2 5.500h3M2 7.500h3M9 3.500h3M9 5.500h3M9 7.500h3" />
        </Svg>
      </button>
      <button type="button" aria-label="Print Layout" className="flex h-[21px] w-10 items-center justify-center bg-[#c5c4c3]">
        <Svg w={12} h={14}><path d="M.500.500h10v13H.500zM2.500 3.500h6M2.500 5.500h6M2.500 7.500h6M2.500 9.500h6M2.500 11.500h6" /></Svg>
      </button>
      <button type="button" aria-label="Web Layout" className="ml-[13px]">
        <Svg w={15} h={14}>
          <path d="M6 12.500H.500V.500h12V5M2.500 3.500h8M2.500 5.500h5M2.500 7.500h3" />
          <circle cx="10" cy="9.500" r="3.800" fill="#f3f2f1" strokeWidth="1.200" />
          <path d="M6 9.500h8M10 6v7.500" />
        </Svg>
      </button>
      <button type="button" aria-label="Zoom out" className="ml-[17px]">
        <Svg w={9} h={9}><path d="M0 4.500h9" strokeWidth="1.200" /></Svg>
      </button>
      <input
        type="range"
        aria-label="Zoom"
        defaultValue={50}
        className="mx-[5px] h-3 w-[100px] appearance-none bg-linear-to-b from-transparent from-45% via-[#b1afad] via-45% to-transparent to-55% [&::-webkit-slider-thumb]:h-3 [&::-webkit-slider-thumb]:w-[5px] [&::-webkit-slider-thumb]:appearance-none [&::-webkit-slider-thumb]:bg-[#797775]"
      />
      <button type="button" aria-label="Zoom in">
        <Svg w={9} h={9}><path d="M0 4.500h9M4.500 0v9" strokeWidth="1.200" /></Svg>
      </button>
      <span className="ml-3 mr-[9px] w-[27px] text-right">100%</span>
    </footer>
  );
}

function Taskbar() {
  return (
    <div className="flex h-10 shrink-0 bg-[#1b222c] text-white">
      <button type="button" aria-label="Start" className="flex w-12 items-center justify-center">
        <svg width="16" height="17" viewBox="0 0 16 17" fill="#fff" aria-hidden="true">
          <path d="M0 2.500L7 1.500V8H0zM8 1.300L16 0v8H8zM0 9h7v6.500l-7-1zM8 9h8v8l-8-1.300z" />
        </svg>
      </button>
      <label className="flex w-[344px] items-center border border-[#b9b9b9] bg-[#f2f2f2] pl-[11px]">
        <Svg w={16} h={17}>
          <circle cx="10" cy="6" r="5" stroke="#222" strokeWidth="1.200" />
          <path d="M6.500 10L1 16" stroke="#222" strokeWidth="1.300" />
        </Svg>
        <input type="text" placeholder="Type here to search" className="ml-3 w-60 bg-transparent text-sm outline-none placeholder:text-[#333]" />
      </label>
      <button type="button" aria-label="Task View" className="flex w-[47px] items-center justify-center">
        <Svg w={17} h={16}>
          <path stroke="#fff" d="M.500 0v2.500h11V0M.500 5.500h11v5H.500zM.500 16v-2.500h11V16M15 0v4M15 8.500V16" strokeWidth="1.200" />
          <path d="M13.500 5h3v3h-3z" fill="#fff" stroke="none" />
        </Svg>
      </button>
      <div className="flex gap-[5px] pl-2">
        <button type="button" aria-label="Chrome" className="flex w-10 items-center justify-center border-b-2 border-[#76b9ed] pt-[2px]">
          <svg width="22" height="22" viewBox="0 0 22 22" aria-hidden="true">
            <circle cx="11" cy="11" r="11" fill="#fcc934" />
            <path d="M11 6h9.700a11 11 0 0 0-19.200-.500L6.500 14z" fill="#d94f43" />
            <path d="M1.500 5.500A11 11 0 0 0 10.500 22l5-8.500L11 16l-4.500-2z" fill="#229a57" />
            <circle cx="11" cy="11" r="5.200" fill="#fff" />
            <circle cx="11" cy="11" r="4.100" fill="#4b8af4" />
          </svg>
        </button>
        <button type="button" aria-label="Word" className="flex w-12 items-center justify-center border-b-2 border-[#76b9ed] bg-[#484d55] pt-[2px]">
          <svg width="24" height="22" viewBox="0 0 24 22" aria-hidden="true">
            <path d="M6 1a1 1 0 0 1 1-1h16a1 1 0 0 1 1 1v5H6z" fill="#41a5ee" />
            <path d="M6 5.500h18V11H6z" fill="#2b7cd3" />
            <path d="M6 11h18v5.500H6z" fill="#185abd" />
            <path d="M6 16.500h18V21a1 1 0 0 1-1 1H7a1 1 0 0 1-1-1z" fill="#103f91" />
            <rect y="5" width="12" height="12" rx="1" fill="#1a52b0" />
            <path d="M2.500 8l1.700 6L6 8.500 7.800 14l1.700-6" fill="none" stroke="#fff" strokeWidth="1.500" />
          </svg>
        </button>
        <button type="button" aria-label="Mod Organizer" className="flex w-10 items-center justify-center border-b-2 border-[#76b9ed]">
          <ModLogo w={22} h={14} />
        </button>
      </div>
      <div className="ml-auto flex items-center">
        <Svg w={13} h={8}><path stroke="#fff" d="M1 7l5.500-5.500L12 7" strokeWidth="1.300" /></Svg>
        <Svg w={16} h={14} className="ml-[9px]">
          <path stroke="#fff" d="M5.500 3.500h9v8h-8M15.500 6v3M1 1v3M4 1v3M.500 4h4v2.500L2.500 8 .500 6.500zM2.500 8v4h3" />
        </Svg>
        <Svg w={13} h={13} className="ml-[11px]">
          <path stroke="#8d9197" d="M.500 12C1 5.500 5.500 1 12 .500M3.500 12.500c.500-5 4-8.500 9-9" />
          <path stroke="#fff" d="M6.500 12.500c.500-3.500 2.500-5.500 6-6M9 12.500c.500-2 1.500-3 3.500-3.500" strokeWidth="1.200" />
          <circle cx="11.500" cy="11.500" r="1.200" fill="#fff" stroke="none" />
        </Svg>
        <Svg w={18} h={14} className="ml-2">
          <path stroke="#fff" d="M.500 4.500H3L6.500 1v12L3 9.500H.500zM9 4.500c1.300 1.500 1.300 3.500 0 5M11.500 2.500c2.500 2.500 2.500 6.500 0 9M14 .500c3.500 3.500 3.500 9.500 0 13" strokeWidth="1.100" />
        </Svg>
        <span className="ml-[9px] text-[11px]">ENG</span>
        <div className="ml-[11px] w-[55px] whitespace-nowrap text-center text-[11px] leading-[18px]">
          <div>12:17 PM</div>
          <div>8/6/2020</div>
        </div>
        <button type="button" aria-label="Notifications" className="relative ml-4 mr-[10px] h-6 w-[26px]">
          <svg width="17" height="17" viewBox="0 0 17 17" className="absolute left-0 top-0" aria-hidden="true">
            <path d="M0 0h16v13H9l-4 4v-4H0z" fill="#fff" />
            <path d="M3 3.500h10M3 6.500h10M3 9.500h6" stroke="#1b222c" />
          </svg>
          <span className="absolute -bottom-[3px] right-px flex size-[17px] items-center justify-center rounded-full border border-[#8d9197] bg-[#2e343d] text-[11px] font-semibold leading-none">2</span>
        </button>
        <div className="mr-1 h-10 w-px bg-[#6b7078]" />
      </div>
    </div>
  );
}

export default function App() {
  return (
    <div className="flex h-screen flex-col overflow-hidden font-['Open_Sans',sans-serif]">
      <TitleBar />
      <Ribbon />
      <Canvas />
      <StatusBar />
      <Taskbar />
    </div>
  );
}
